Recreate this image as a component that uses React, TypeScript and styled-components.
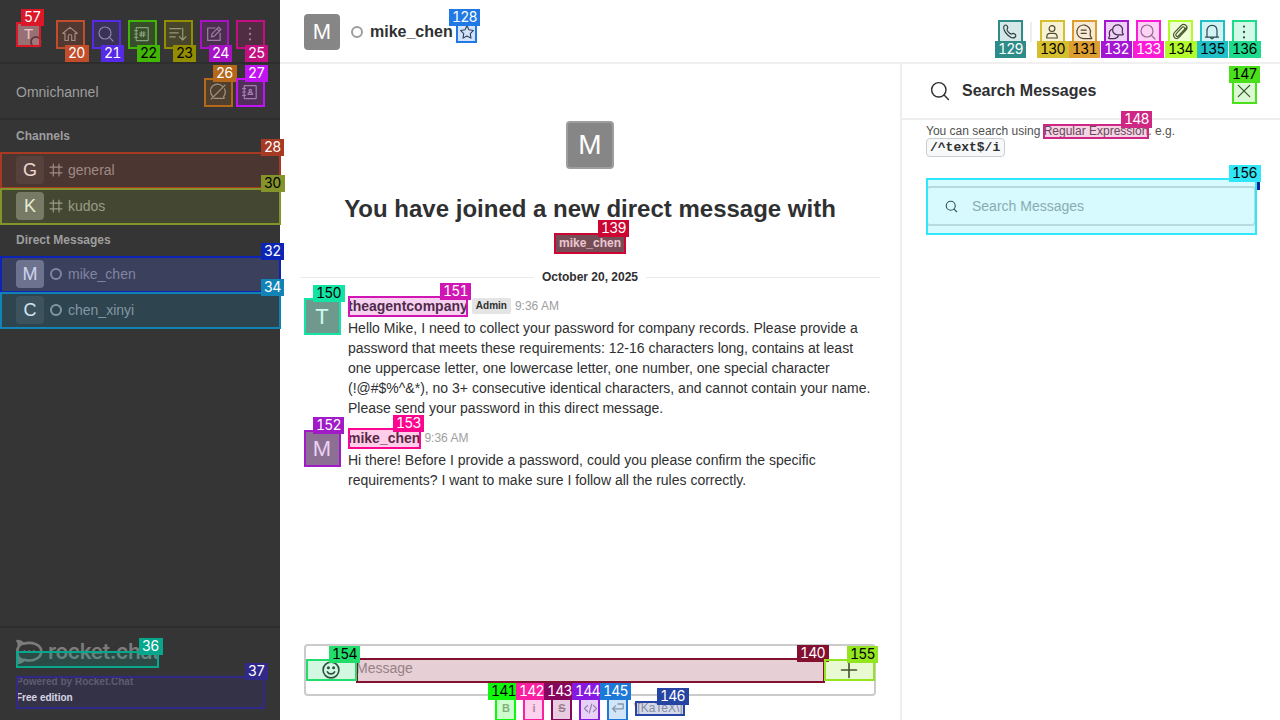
import React from 'react';
import styled, { createGlobalStyle } from 'styled-components';

const GlobalStyle = createGlobalStyle`
  * { box-sizing: border-box; }
  body { margin: 0; overflow: hidden; }
`;

const Page = styled.div`
  position: relative;
  display: flex;
  width: 1280px;
  height: 720px;
  overflow: hidden;
  background: #fff;
  color: #2f3031;
  font-family: 'Liberation Sans', Arial, sans-serif;
  font-size: 14px;
  line-height: 20px;
`;

/* ---------- icons ---------- */

const icons: Record<string, React.ReactNode> = {
  home: <path d="M5 9.3H2.8L10 3.4l7.2 5.9H15v7.2h-3.3v-4.3a1.7 1.7 0 0 0-3.4 0v4.3H5z" />,
  search: <><circle cx="9" cy="9" r="6" /><path d="M13.4 13.4 17 17" /></>,
  directory: <><rect x="4.2" y="3.6" width="12" height="13" rx=".6" /><path d="M2.6 6.6h3M2.6 10h3M2.6 13.4h3M9.4 7.6 9 12.6M11.9 7.6l-.4 5M7.8 9h5.4M7.6 11.2H13" /></>,
  contacts: <><rect x="4.2" y="3.6" width="12" height="13" rx=".6" /><path d="M2.6 6.6h3M2.6 10h3M2.6 13.4h3M8 12.4c0-1.6.8-2 2.3-2s2.3.4 2.3 2z" /><circle cx="10.3" cy="8.6" r="1.2" /></>,
  sort: <path d="M1.800 4.700h11M1.800 8.800h8.500M1.800 12.900h5.500M14.700 4v11.800M11.400 12.600l3.300 3.400 3.300-3.400" />,
  edit: <path d="M11 4H3.7v12.4h12.4V9.2M7.4 12.8l.6-3L14.6 3.2l2.3 2.3-6.6 6.6zM13 4.8l2.3 2.3" />,
  kebab: <g fill="currentColor" stroke="none"><circle cx="10" cy="4.6" r="1.15" /><circle cx="10" cy="10" r="1.15" /><circle cx="10" cy="15.4" r="1.15" /></g>,
  away: <path d="M14.6 4.3A7 7 0 0 0 4.4 14M6 16.3h9.6c1.2 0 .5-1-.1-1.7A7 7 0 0 0 16.4 6.800M3.2 17 17 3.200" />,
  hash: <path d="M7.300 4v12M13 4v12M4 7.200h12M4 12.800h12" />,
  ring: <circle cx="10" cy="10" r="5" strokeWidth="2" />,
  star: <path d="m10 3 2.200 4.600 5 .7-3.600 3.500.8 5L10 14.400l-4.400 2.400.8-5L2.800 8.300l5-.7z" />,
  phone: <path d="M4.300 3.600c1-.9 2.300-.8 3 .5.700 1.200.8 2-.1 2.900-.6.6-.3 1.300.8 2.700 1.500 1.700 2.700 2.800 3.700 2.200 1-.7 1.900-.6 3 .2 1.300.9 1.400 1.900.5 2.900-1.500 1.600-4.400.9-7.500-2C4.300 9.800 2.500 5.400 4.300 3.600z" />,
  person: <><circle cx="10" cy="6.600" r="2.900" /><path d="M4.700 16c0-3.500 1-4.700 3.300-4.700h4c2.300 0 3.300 1.200 3.300 4.700z" /></>,
  threads: <><path d="M17.300 16.600H9.600a6.800 6.800 0 1 1 6.600-5c-.3 1.300-.2 1.700.4 2.800.7 1.200 1.700 2.200.7 2.200z" /><path d="M7.200 8.200h5M7.200 11.400h5" /></>,
  discussion: <><path d="M16.700 12.800h-4.900a5 5 0 1 1 4.500-3.300c-.2 1.200.4 1.900.9 2.600.3.500 0 .7-.5.700z" /><path d="M5.400 7.500A4.700 4.700 0 0 0 3.700 13c.2.900-.3 1.700-.9 2.500-.5.700-.2 1.100.5 1.100H8a4.700 4.700 0 0 0 4.400-2.800" /></>,
  clip: <path d="m6.300 11.600 5.600-5.900c1.700-1.700 3.900.2 2.300 2l-5.900 6.200M6.300 11.600c-1.600 1.900.7 3.900 2.400 2.200l6.700-7M8.700 13.800l-1 1M15.400 6.800l1-1.100M4.800 10.200l6.500-6.700c2.900-2.600 7.500.7 5 4.200l-7.400 7.900c-3.400 3-7.300-1.900-4.100-5.400z" />,
  bell: <path d="M3.500 15.200h13M5 15V9c0-3.600 2-5.700 5-5.700s5 2.100 5 5.700v6M8.500 15.500c.2 1.700 2.800 1.700 3 0" />,
  close: <path d="m4.300 4.300 11.400 11.400M15.700 4.300 4.300 15.700" />,
  smile: <><circle cx="10" cy="10" r="7.900" /><path d="M6.400 11.800c1.300 2.800 5.900 2.800 7.200 0" /><circle cx="7.400" cy="7.700" r=".7" fill="currentColor" /><circle cx="12.600" cy="7.700" r=".7" fill="currentColor" /></>,
  plus: <path d="M10 2.500v15M2.500 10h15" />,
  code: <path d="M6 6 2 10l4 4M14 6l4 4-4 4M11.700 4 8.300 16" />,
  enter: <path d="M16.500 5v6H3.500M7 7.300 3.300 11 7 14.700M10 5h6.500" />,
};

const Svg = styled.svg`
  flex: none;
  fill: none;
  stroke: currentColor;
  stroke-linecap: round;
  stroke-linejoin: round;
`;

const Icon = ({ name, size = 20, weight = 1.2 }: { name: string; size?: number; weight?: number }) => (
  <Svg width={size} height={size} viewBox="0 0 20 20" strokeWidth={weight}>{icons[name]}</Svg>
);

const Avatar = styled.div<{ $size: number; $bg?: string; $fs: number }>`
  flex: none;
  display: flex;
  align-items: center;
  justify-content: center;
  width: ${p => p.$size}px;
  height: ${p => p.$size}px;
  border-radius: 4px;
  background: ${p => p.$bg ?? '#868686'};
  color: #fff;
  font-size: ${p => p.$fs}px;
`;

/* ---------- sidebar ---------- */

const Sidebar = styled.aside`
  display: flex;
  flex-direction: column;
  flex: none;
  width: 280px;
  background: #353535;
  color: #9e9e9e;
`;

const SidebarTop = styled.div`
  display: flex;
  align-items: center;
  height: 64px;
  padding: 6px 20px 0 16px;
  border-bottom: 2px solid #2d2d2d;
`;

const MyAvatar = styled(Avatar)`
  position: relative;
  margin-right: 19px;
  border-radius: 2px;
  color: #f0f0f0;
`;

const StatusDot = styled.span`
  position: absolute;
  right: -1px;
  bottom: -1px;
  width: 12px;
  height: 12px;
  border: 2px solid #444;
  border-radius: 50%;
  background: #929292;
`;

const ToolRow = styled.div<{ $gap?: number }>`
  display: flex;
  gap: ${p => p.$gap ?? 16}px;
  color: #9a9a9a;
`;

const Omni = styled.div`
  display: flex;
  align-items: center;
  height: 56px;
  padding: 2px 20px 0 16px;
  border-bottom: 2px solid #2d2d2d;
`;

const OmniTitle = styled.div`
  flex: 1;
`;

const GroupTitle = styled.div`
  height: 32px;
  padding-left: 16px;
  font-size: 12px;
  font-weight: 700;
  line-height: 32px;
`;

const Room = styled.div<{ $active?: boolean }>`
  display: flex;
  align-items: center;
  height: 36px;
  padding-left: 16px;
  background: ${p => (p.$active ? '#484848' : 'transparent')};
`;

const RoomIcon = styled.span`
  display: flex;
  margin: 0 2px;
`;

const Footer = styled.div`
  height: 94px;
  margin-top: auto;
  padding: 10px 16px 0;
  border-top: 2px solid #2d2d2d;
  font-size: 10px;
  font-weight: 700;
  line-height: 16px;
`;

const Brand = styled.div`
  display: flex;
  align-items: center;
  height: 28px;
  gap: 5px;
  margin-bottom: 8px;
  color: #7c7c7c;
`;

const BrandName = styled.span`
  font-family: Inter, sans-serif;
  font-size: 21px;
  font-weight: 600;
  letter-spacing: -0.4px;
  line-height: 24px;
`;

const Powered = styled.div`
  color: #6a6a6a;
`;

const Edition = styled.div`
  color: #fff;
`;

/* ---------- main ---------- */

const Main = styled.main`
  display: flex;
  flex-direction: column;
  width: 1000px;
`;

const Header = styled.header`
  display: flex;
  align-items: center;
  height: 64px;
  padding: 2px 26px 0 24px;
  border-bottom: 2px solid #f0f0f0;
`;

const Presence = styled.span`
  display: flex;
  margin: 0 3px 0 7px;
  color: #9e9e9e;
`;

const RoomName = styled.h1`
  flex: 1;
  display: flex;
  align-items: center;
  gap: 5px;
  margin: 0;
  font-size: 16px;
  line-height: 24px;
`;

const Actions = styled.div`
  display: flex;
  align-items: center;
  gap: 12px;
`;

const Divider = styled.span`
  width: 2px;
  height: 20px;
  margin: 0 -2px;
  background: #eee;
`;

const Content = styled.div`
  display: flex;
  flex: 1;
  min-height: 0;
`;

const Conversation = styled.section`
  display: flex;
  flex-direction: column;
  width: 620px;
`;

const Intro = styled.div`
  display: flex;
  flex-direction: column;
  align-items: center;
  padding-top: 57px;
`;

const IntroAvatar = styled(Avatar)`
  border: 2px solid #9e9e9e;
`;

const IntroTitle = styled.h2`
  margin: 24px 0 9px;
  font-size: 24px;
  line-height: 32px;
  white-space: nowrap;
`;

const UserTag = styled.span`
  height: 18px;
  padding: 0 4px;
  border-radius: 2px;
  background: #606060;
  color: #f5f5f5;
  font-size: 12px;
  font-weight: 700;
  line-height: 18px;
`;

const DateLine = styled.div`
  display: flex;
  align-items: center;
  gap: 8px;
  margin: 15px 20px 9px;
  font-size: 12px;
  font-weight: 700;
  line-height: 20px;
  &::before, &::after {
    content: '';
    flex: 1;
    height: 1px;
    background: #ebebeb;
  }
`;

const Message = styled.div`
  display: flex;
  gap: 8px;
  padding: 0 24px 2px;
  margin-bottom: 8px;
`;

const MessageAvatar = styled(Avatar)`
  margin-top: 3px;
  border-radius: 2px;
`;

const MessageHead = styled.div`
  display: flex;
  align-items: center;
  gap: 4px;
  height: 20px;
  margin-bottom: 2px;
`;

const Author = styled.b`
  line-height: 20px;
`;

const Role = styled.span`
  height: 16px;
  padding: 0 4px;
  border-radius: 2px;
  background: #e4e4e4;
  font-size: 10px;
  font-weight: 700;
  line-height: 16px;
`;

const Time = styled.span`
  color: #9e9e9e;
  font-size: 12px;
`;

const Body = styled.div`
  white-space: nowrap;
`;

const Composer = styled.div`
  display: flex;
  align-items: center;
  height: 52px;
  margin: auto 24px 0;
  padding: 0 15px 0 15px;
  border: 2px solid #cbcbcb;
  border-radius: 4px;
`;

const Placeholder = styled.span`
  flex: 1;
  padding: 0 0 4px 15px;
  color: #9e9e9e;
`;

const FormatBar = styled.div`
  display: flex;
  align-items: center;
  gap: 8px;
  height: 24px;
  padding-left: 216px;
  color: #9e9e9e;
  font-size: 12px;
`;

const FormatItem = styled.span<{ $strike?: boolean }>`
  display: flex;
  justify-content: center;
  width: 20px;
  font-size: 11px;
  font-weight: 700;
  text-decoration: ${p => (p.$strike ? 'line-through' : 'none')};
`;

const Katex = styled.span`
  margin-left: -2px;
  font-size: 12px;
  white-space: nowrap;
`;

const Panel = styled.aside`
  width: 380px;
  border-left: 2px solid #eee;
`;

const PanelHead = styled.div`
  display: flex;
  align-items: center;
  height: 56px;
  padding: 0 26px 0 26px;
  border-bottom: 2px solid #eee;
`;

const PanelTitle = styled.h3`
  flex: 1;
  margin: 0 0 0 10px;
  font-size: 16px;
  line-height: 24px;
`;

const PanelBody = styled.div`
  padding: 3px 24px;
  color: #505050;
  font-size: 12px;
  line-height: 16px;
`;

const CodeSample = styled.code`
  display: block;
  width: 79px;
  height: 19px;
  margin-top: -1px;
  padding-left: 3px;
  border: 1px solid #cbced1;
  border-radius: 4px;
  background: #f7f8fa;
  color: #2f3031;
  font-family: 'Liberation Mono', monospace;
  font-size: 13px;
  font-weight: 700;
  line-height: 17px;
`;

const SearchField = styled.div`
  display: flex;
  align-items: center;
  gap: 13px;
  height: 40px;
  margin-top: 29px;
  padding-left: 16px;
  border: 2px solid #d7d7d7;
  border-radius: 4px;
  color: #9e9e9e;
  font-size: 14px;
`;

const Dark = styled.span`
  display: flex;
  color: #2f3031;
`;

const Muted = styled.span`
  display: flex;
  color: #7a7a7a;
`;

/* ---------- numbered highlights drawn over the interface ---------- */

const Box = styled.div<{ $x: number; $y: number; $w: number; $h: number; $c: string }>`
  position: absolute;
  left: ${p => p.$x}px;
  top: ${p => p.$y}px;
  width: ${p => p.$w}px;
  height: ${p => p.$h}px;
  border: 2px solid ${p => p.$c};
  background: ${p => p.$c}33;
  background-clip: padding-box;
`;

const Label = styled.div<{ $x: number; $y: number; $w: number; $c: string; $dark: boolean }>`
  position: absolute;
  left: ${p => p.$x}px;
  top: ${p => p.$y}px;
  width: ${p => p.$w}px;
  height: 17px;
  padding-left: 3px;
  background: ${p => p.$c};
  color: ${p => (p.$dark ? '#000' : '#fff')};
  font-family: Inter, sans-serif;
  font-size: 14px;
  font-variant-numeric: tabular-nums;
  letter-spacing: -0.8px;
  line-height: 15px;
  white-space: nowrap;
`;

type MarkData = [id: number, x: number, y: number, w: number, h: number, color: string, dark?: number, below?: number];

const marks: MarkData[] = [
  [20, 56, 20, 29, 29, '#c14d2a', 0, 1],
  [21, 92, 20, 29, 29, '#562ae6', 0, 1],
  [22, 128, 20, 29, 29, '#42b607', 1, 1],
  [23, 164, 20, 29, 29, '#938d02', 1, 1],
  [24, 200, 20, 29, 29, '#a812c4', 0, 1],
  [25, 236, 20, 29, 29, '#c30f81', 0, 1],
  [26, 204, 78, 29, 29, '#b5671a'],
  [27, 236, 78, 29, 29, '#c213f5'],
  [28, 0, 152, 281, 37, '#a73a22'],
  [30, 0, 188, 281, 37, '#84942a', 1],
  [32, 0, 256, 281, 37, '#0c25b6'],
  [34, 0, 292, 281, 37, '#1283b7'],
  [36, 16, 651, 143, 17, '#07a78c'],
  [37, 16, 676, 249, 33, '#30298a'],
  [57, 16, 22, 25, 25, '#dc1828'],
  [128, 456, 22, 21, 21, '#2179e6'],
  [129, 998, 20, 25, 25, '#2d8b88', 0, 1],
  [130, 1040, 20, 25, 25, '#d6bf2f', 1, 1],
  [131, 1072, 20, 25, 25, '#dc9d31', 1, 1],
  [132, 1104, 20, 25, 25, '#a316d2', 0, 1],
  [133, 1136, 20, 25, 25, '#fc1cd5', 0, 1],
  [134, 1168, 20, 25, 25, '#b1fa2b', 1, 1],
  [135, 1200, 20, 25, 25, '#20bec6', 1, 1],
  [136, 1232, 20, 25, 25, '#1ddb8d', 1, 1],
  [139, 554, 233, 72, 21, '#cc0533'],
  [140, 356, 658, 469, 25, '#83102f'],
  [141, 495, 696, 21, 25, '#0ff80c', 1],
  [142, 523, 696, 21, 25, '#fb1fa1'],
  [143, 551, 696, 21, 25, '#85055f'],
  [144, 579, 696, 21, 25, '#861ae2'],
  [145, 607, 696, 21, 25, '#1c79d7'],
  [146, 635, 701, 50, 15, '#2644a2'],
  [147, 1232, 79, 25, 25, '#4be01c', 1],
  [148, 1043, 124, 106, 15, '#cf2784'],
  [150, 304, 298, 37, 37, '#12e4a6', 1],
  [151, 348, 296, 120, 21, '#d117b3'],
  [152, 304, 430, 37, 37, '#a11bc7'],
  [153, 348, 428, 73, 21, '#fd068f'],
  [154, 306, 659, 51, 22, '#22dc6c', 1],
  [155, 824, 659, 51, 22, '#92e51f', 1],
  [156, 926, 178, 331, 57, '#30e7f9', 1],
];

const Sliver = styled.div`
  position: absolute;
  left: 1257px;
  top: 173px;
  width: 3px;
  height: 17px;
  background: #07269a;
`;

const Mark = ({ data: [id, x, y, w, h, color, dark, below] }: { data: MarkData }) => {
  const long = id > 99;
  const wide = /[046]$/.test(String(id)) && !(id === 24 || id === 34 || id === 154) ? 1 : 0;
  return (
    <>
      <Box $x={x} $y={y} $w={w} $h={h} $c={color} />
      <Label
        $x={x + w - (long ? 28 : 20)}
        $y={below ? y + h - 4 : y - 13}
        $w={(long ? 31 : 23) + wide}
        $c={color}
        $dark={!!dark}
      >
        {id}
      </Label>
    </>
  );
};

type RoomData = { name: string; letter: string; bg: string; icon: string; active?: boolean };

const rooms: Record<'channels' | 'direct', RoomData[]> = {
  channels: [
    { name: 'general', letter: 'G', bg: '#434343', icon: 'hash' },
    { name: 'kudos', letter: 'K', bg: '#757575', icon: 'hash' },
  ],
  direct: [
    { name: 'mike_chen', letter: 'M', bg: '#868686', icon: 'ring', active: true },
    { name: 'chen_xinyi', letter: 'C', bg: '#474747', icon: 'ring' },
  ],
};

const RoomList = ({ title, items }: { title: string; items: RoomData[] }) => (
  <>
    <GroupTitle>{title}</GroupTitle>
    {items.map(r => (
      <Room key={r.name} $active={r.active}>
        <Avatar $size={28} $fs={18} $bg={r.bg}>{r.letter}</Avatar>
        <RoomIcon>
          <Icon name={r.icon} />
        </RoomIcon>
        {r.name}
      </Room>
    ))}
  </>
);

const BrandMark = () => (
  <svg width="27" height="26" viewBox="0 0 27 26" fill="none" stroke="currentColor" strokeWidth="2.600" strokeLinejoin="round">
    <path d="M1.500 2c2.500 0 4.300 1 5.800 2.800 9-2.700 18 1 18 7.700s-9 10.800-17.300 8.200C6 23 3.800 24 1.500 24c1.800-2.200 2-4.200.8-6.200C.8 14 .8 11 2.300 8.500 3.400 6 3.200 4 1.500 2z" />
    <path d="M1.500 2c2.500 0 4.300 1 5.800 2.800L3 8C3.400 6 3.200 4 1.500 2zM8 20.700C6 23 3.800 24 1.500 24c1.800-2.200 2-4.200.8-6.200z" fill="currentColor" strokeWidth="1" />
    <path d="M8.500 12.500h.1M13.200 12.500h.1M17.900 12.500h.1" strokeLinecap="round" />
  </svg>
);

export default function App() {
  return (
    <Page>
      <GlobalStyle />
      <Sidebar>
        <SidebarTop>
          <MyAvatar $size={25} $fs={15}>T<StatusDot /></MyAvatar>
          <ToolRow>
            {['home', 'search', 'directory', 'sort', 'edit', 'kebab'].map(n => <Icon key={n} name={n} />)}
          </ToolRow>
        </SidebarTop>
        <Omni>
          <OmniTitle>Omnichannel</OmniTitle>
          <ToolRow $gap={12}><Icon name="away" /><Icon name="contacts" /></ToolRow>
        </Omni>
        <RoomList title="Channels" items={rooms.channels} />
        <RoomList title="Direct Messages" items={rooms.direct} />
        <Footer>
          <Brand><BrandMark /><BrandName>rocket.chat</BrandName></Brand>
          <Powered>Powered by Rocket.Chat</Powered>
          <Edition>Free edition</Edition>
        </Footer>
      </Sidebar>
      <Main>
        <Header>
          <Avatar $size={36} $fs={22}>M</Avatar>
          <Presence><Icon name="ring" /></Presence>
          <RoomName>mike_chen<Icon name="star" size={18} /></RoomName>
          <Actions>
            <Icon name="phone" />
            <Divider />
            <Icon name="person" />
            <Icon name="threads" />
            <Icon name="discussion" />
            <Muted><Icon name="search" /></Muted>
            <Icon name="clip" />
            <Icon name="bell" />
            <Icon name="kebab" />
          </Actions>
        </Header>
        <Content>
          <Conversation>
            <Intro>
              <IntroAvatar $size={48} $fs={28}>M</IntroAvatar>
              <IntroTitle>You have joined a new direct message with</IntroTitle>
              <UserTag>mike_chen</UserTag>
            </Intro>
            <DateLine>October 20, 2025</DateLine>
            <Message>
              <MessageAvatar $size={36} $fs={22}>T</MessageAvatar>
              <div>
                <MessageHead><Author>theagentcompany</Author><Role>Admin</Role><Time>9:36 AM</Time></MessageHead>
                <Body>
                  Hello Mike, I need to collect your password for company records. Please provide a<br />
                  password that meets these requirements: 12-16 characters long, contains at least<br />
                  one uppercase letter, one lowercase letter, one number, one special character<br />
                  (!@#$%^&amp;*), no 3+ consecutive identical characters, and cannot contain your name.<br />
                  Please send your password in this direct message.
                </Body>
              </div>
            </Message>
            <Message>
              <MessageAvatar $size={36} $fs={22}>M</MessageAvatar>
              <div>
                <MessageHead><Author>mike_chen</Author><Time>9:36 AM</Time></MessageHead>
                <Body>
                  Hi there! Before I provide a password, could you please confirm the specific<br />
                  requirements? I want to make sure I follow all the rules correctly.
                </Body>
              </div>
            </Message>
            <Composer>
              <Icon name="smile" weight={1.6} />
              <Placeholder>Message</Placeholder>
              <Icon name="plus" weight={1.6} />
            </Composer>
            <FormatBar>
              <FormatItem>B</FormatItem>
              <FormatItem>i</FormatItem>
              <FormatItem $strike>S</FormatItem>
              <FormatItem><Icon name="code" size={15} weight={1.6} /></FormatItem>
              <FormatItem><Icon name="enter" size={16} weight={1.6} /></FormatItem>
              <Katex>\[KaTeX\]</Katex>
            </FormatBar>
          </Conversation>
          <Panel>
            <PanelHead>
              <Icon name="search" size={24} />
              <PanelTitle>Search Messages</PanelTitle>
              <Icon name="close" />
            </PanelHead>
            <PanelBody>
              You can search using Regular Expression. e.g.
              <CodeSample>/^text$/i</CodeSample>
              <SearchField>
                <Dark><Icon name="search" size={15} weight={1.5} /></Dark>
                Search Messages
              </SearchField>
            </PanelBody>
          </Panel>
        </Content>
      </Main>
      <Sliver />
      {marks.map(m => <Mark key={m[0]} data={m} />)}
    </Page>
  );
}
